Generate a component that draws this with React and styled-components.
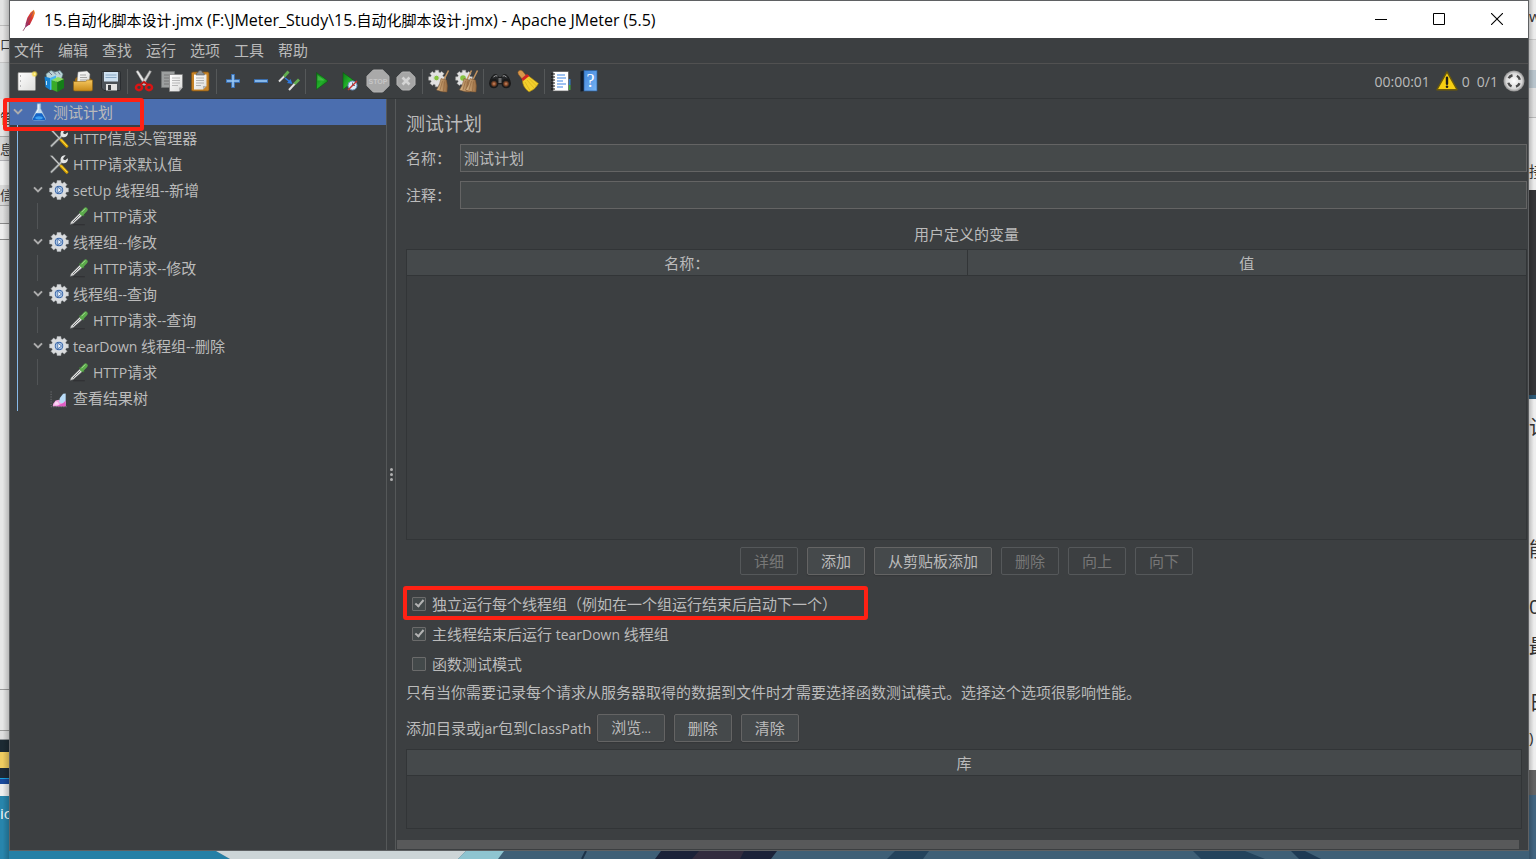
import React from "react";
import styled, { createGlobalStyle, css } from "styled-components";

const GlobalStyle = createGlobalStyle`
  *, *::before, *::after { box-sizing: border-box; }
  body {
    margin: 0;
    background: #3f5f76;
    color: #bbbbbb;
    font-family: "Open Sans", "Noto Sans CJK SC", sans-serif;
    font-size: 15px;
    line-height: 20px;
  }
  button, input { font: inherit; color: inherit; margin: 0; }
  svg { display: block; flex: none; }
`;

/* ---------- desktop behind the window ---------- */

const Desktop = styled.div`
  min-height: 100vh;
  display: grid;
  grid-template-columns: 9px minmax(0, 1fr) 7px;
  grid-template-rows: minmax(0, 1fr) 8px;
  overflow: hidden;
`;

const Strip = styled.div`
  grid-row: 1 / span 2;
  grid-column: ${(p) => (p.$side === "left" ? 1 : 3)};
  display: flex;
  flex-direction: column;
  overflow: hidden;
  color: #333333;
  position: relative;
  &::after {
    content: "";
    position: absolute;
    inset: 0;
    ${(p) =>
      p.$side === "left"
        ? css`background: linear-gradient(to right, transparent 30%, rgba(0, 0, 0, 0.2));`
        : css`background: linear-gradient(to left, transparent 30%, rgba(0, 0, 0, 0.2));`}
  }
`;

const Slice = styled.div`
  height: ${(p) => p.$h}px;
  flex: ${(p) => (p.$grow ? "1 0 auto" : "none")};
  background: ${(p) => p.$bg};
  color: ${(p) => p.$color || "inherit"};
  border-bottom: ${(p) => (p.$line ? `1px solid ${p.$line}` : "0")};
  display: flex;
  align-items: center;
  white-space: nowrap;
  overflow: hidden;
  font-size: ${(p) => p.$size || 15}px;
`;

const Wallpaper = styled.div`
  grid-column: 2;
  grid-row: 2;
  svg { width: 100%; height: 8px; }
`;

/* ---------- window frame ---------- */

const Window = styled.div`
  grid-column: 2;
  grid-row: 1;
  display: flex;
  flex-direction: column;
  background: #3c3f41;
  border: 1px solid #5f6163;
  position: relative;
`;

const TitleBar = styled.header`
  height: 37px;
  display: flex;
  align-items: center;
  background: #ffffff;
  color: #000000;
  padding: 0 2px 0 6px;
`;

const TitleText = styled.h1`
  margin: 0 0 0 2px;
  flex: 1;
  font-size: 15px;
  font-weight: 400;
  white-space: nowrap;
`;

const WindowButton = styled.button`
  width: 58px;
  height: 36px;
  border: 0;
  padding: 0 0 2px;
  background: transparent;
  display: flex;
  align-items: center;
  justify-content: center;
`;

const MenuBar = styled.nav`
  height: 26px;
  display: flex;
  align-items: center;
  gap: 14px;
  padding: 0 0 2px 4px;
  border-bottom: 1px solid #515151;
`;

const MenuButton = styled.button`
  border: 0;
  padding: 0;
  background: transparent;
`;

const ToolBar = styled.div`
  height: 35px;
  display: flex;
  align-items: center;
  padding: 0 3px 0 3px;
  border-bottom: 1px solid #323537;
`;

const ToolButton = styled.button`
  width: 28px;
  height: 28px;
  border: 0;
  padding: 0;
  background: transparent;
  display: flex;
  align-items: center;
  justify-content: center;
`;

const ToolSeparator = styled.span`
  width: 1px;
  height: 25px;
  margin: 0 2px;
  background: #555859;
`;

const Status = styled.div`
  margin-left: auto;
  display: flex;
  align-items: center;
  font-size: 14px;
  line-height: 22px;
`;

const StatusText = styled.span`
  padding-top: 2px;
  margin-left: ${(p) => p.$before || 0}px;
  margin-right: ${(p) => p.$after}px;
`;

/* ---------- body ---------- */

const Body = styled.main`
  flex: 1;
  display: grid;
  grid-template-columns: 376px 10px minmax(0, 1fr);
`;

const Splitter = styled.div`
  border-left: 1px solid #555859;
  border-right: 1px solid #555859;
  display: flex;
  flex-direction: column;
  align-items: center;
  justify-content: center;
  gap: 2px;
`;

const Dot = styled.i`
  width: 3px;
  height: 3px;
  border-radius: 50%;
  background: #b0b0b0;
`;

const Tree = styled.ul`
  list-style: none;
  margin: 0;
  padding: 0;
`;

const Branch = styled(Tree)`
  border-left: 1px solid ${(p) => (p.$active ? "#87b9e8" : "#515456")};
  margin-left: ${(p) => (p.$active ? 7 : 19)}px;
`;

const TreeRow = styled.div`
  position: relative;
  height: 26px;
  display: flex;
  align-items: center;
  padding-left: ${(p) => (p.$root ? 0 : 12)}px;
  background: ${(p) => (p.$selected ? "#4b6eaf" : "transparent")};
  white-space: nowrap;
`;

const Toggle = styled.button`
  width: 16px;
  height: 16px;
  border: 0;
  padding: 0;
  margin-right: 3px;
  background: transparent;
  display: flex;
  align-items: center;
  justify-content: center;
`;

const ToggleSpace = styled.span`
  width: 16px;
  margin-right: 3px;
`;

const NodeName = styled.span`
  margin-left: 4px;
`;

const Latin = styled.span`
  font-size: ${(p) => p.$size}px;
`;

const Marker = styled.span`
  position: absolute;
  border: 4px solid #ff2114;
  border-radius: 3px;
  pointer-events: none;
  z-index: 2;
`;

const TreeMarker = styled(Marker)`
  left: -7px;
  top: -1px;
  width: 141px;
  height: 33px;
`;

const OptionMarker = styled(Marker)`
  left: -3px;
  right: -31px;
  top: -3px;
  bottom: -1px;
`;

/* ---------- test plan form ---------- */

const Panel = styled.section`
  display: flex;
  flex-direction: column;
  padding: 13px 1px 1px 10px;
`;

const PanelTitle = styled.h2`
  margin: 0 0 8px;
  font-size: 19px;
  line-height: 24px;
  font-weight: 400;
`;

const Field = styled.div`
  display: flex;
  align-items: center;
  margin-bottom: 9px;
  label { width: 54px; }
`;

const TextInput = styled.input`
  flex: 1;
  min-width: 0;
  height: 28px;
  padding: 0 3px 2px;
  background: #45494a;
  border: 1px solid #646464;
  outline: 0;
`;

const Caption = styled.h3`
  margin: 0;
  padding-top: 1px;
  font-size: 15px;
  font-weight: 400;
  line-height: 30px;
  text-align: center;
`;

const TableBox = styled.div`
  border: 1px solid #323537;
  flex: ${(p) => (p.$fill ? "1 0 160px" : "0 0 80px")};
  margin-right: ${(p) => (p.$fill ? 0 : 5)}px;
`;

const Table = styled.table`
  width: 100%;
  table-layout: fixed;
  border-spacing: 0;
  th {
    height: 26px;
    padding: 0;
    font-weight: 400;
    background: #45494b;
    border-bottom: 1px solid #323537;
  }
  th + th { border-left: 1px solid #323537; }
`;

const Actions = styled.div`
  display: flex;
  align-items: center;
  gap: 9px;
  justify-content: ${(p) => (p.$center ? "center" : "flex-start")};
  margin: ${(p) => (p.$center ? "7px 0 14px" : "9px 0 7px")};
`;

const Button = styled.button`
  height: 28px;
  padding: 0 13px;
  border: 1px solid #646464;
  border-radius: 2px;
  background: #45494b;
  box-shadow: 0 1px 1px #35383a;
  white-space: nowrap;
  &:disabled {
    color: #777777;
    border-color: #55585a;
    background: transparent;
    box-shadow: none;
  }
`;

const ClassPathLabel = styled.span`
  margin-right: -3px;
`;

const Option = styled.label`
  position: relative;
  align-self: flex-start;
  height: 30px;
  display: flex;
  align-items: center;
  gap: 6px;
  padding-left: 6px;
`;

const CheckBox = styled.input`
  appearance: none;
  width: 14px;
  height: 14px;
  border: 1px solid #6b6b6b;
  border-radius: 1px;
  background: #43494a;
  display: flex;
  justify-content: center;
  &:checked::after {
    content: "";
    width: 5px;
    height: 9px;
    border: solid #b4b4b4;
    border-width: 0 2px 2px 0;
    transform: rotate(40deg);
  }
`;

const Note = styled.p`
  margin: 0;
  line-height: 26px;
`;

const ScrollTrack = styled.div`
  margin: 11px 8px 0 -9px;
  height: 9px;
  background: #58595a;
`;

/* Latin runs carry their own size beside the Chinese text around them. */
function Mixed({ text, size = 14 }) {
  return text.split(/([\x20-\x7e]+)/).map((part, i) =>
    i % 2 ? <Latin key={i} $size={size}>{part}</Latin> : part
  );
}

/* ---------- icons ---------- */

const Icon = ({ size = 24, children }) => (
  <svg width={size} height={size} viewBox="0 0 24 24" aria-hidden="true">{children}</svg>
);

const HiddenSvg = styled.svg`
  position: absolute;
`;

const Gradients = () => (
  <HiddenSvg width="0" height="0" aria-hidden="true">
    <defs>
      <linearGradient id="paper" x1="0" y1="0" x2="1" y2="1">
        <stop offset="0" stopColor="#ffffff" /><stop offset="1" stopColor="#dcdcda" />
      </linearGradient>
      <linearGradient id="folder" x1="0" y1="0" x2="0" y2="1">
        <stop offset="0" stopColor="#f6c860" /><stop offset="1" stopColor="#c88a18" />
      </linearGradient>
      <linearGradient id="play" x1="0" y1="0" x2="1" y2="1">
        <stop offset="0" stopColor="#0c7a14" /><stop offset=".5" stopColor="#22b02a" /><stop offset="1" stopColor="#0b6a10" />
      </linearGradient>
      <linearGradient id="straw" x1="0" y1="0" x2="1" y2="0">
        <stop offset="0" stopColor="#dcb98a" /><stop offset="1" stopColor="#9a6d42" />
      </linearGradient>
      <linearGradient id="quill" x1="1" y1="0" x2="0" y2="1">
        <stop offset="0" stopColor="#f8a020" /><stop offset=".4" stopColor="#e03a2a" /><stop offset="1" stopColor="#8a1a70" />
      </linearGradient>
      <linearGradient id="book" x1="0" y1="0" x2="1" y2="1">
        <stop offset="0" stopColor="#3f86dc" /><stop offset="1" stopColor="#79b4f4" />
      </linearGradient>
      <radialGradient id="silver"><stop offset="0" stopColor="#ffffff" /><stop offset=".75" stopColor="#d8d8d8" /><stop offset="1" stopColor="#8c8c8c" /></radialGradient>
      <radialGradient id="glow"><stop offset="0" stopColor="#fffbd0" /><stop offset=".4" stopColor="#f4dc50" /><stop offset="1" stopColor="#f4dc50" stopOpacity="0" /></radialGradient>
      <radialGradient id="lens"><stop offset="0" stopColor="#c89070" /><stop offset=".5" stopColor="#8a4a28" /><stop offset="1" stopColor="#1c1c1c" /></radialGradient>
    </defs>
  </HiddenSvg>
);

const FeatherIcon = () => (
  <Icon size={26}>
    <path d="M16.500 2.500l-3 2.500-3 5-1.500 5-.5 4 4.500-3 3-6 1.500-4.500z" fill="url(#quill)" />
    <path d="M16 4l-4 7-3 7-2.500 4" stroke="#8e4a68" strokeWidth=".8" fill="none" />
  </Icon>
);

const NewIcon = () => (
  <Icon>
    <rect x="3" y="3.500" width="17.500" height="18" rx="1" fill="url(#paper)" stroke="#8b8b88" strokeWidth=".7" />
    <path d="M5.500 6v2M5.500 11v2M5.500 16v2" stroke="#bbb" />
    <circle cx="19.500" cy="5" r="3.500" fill="url(#glow)" />
  </Icon>
);

const TemplatesIcon = () => (
  <Icon>
    <path d="M3 5l5-3.500 4 1.500 5-1.500 3 3.500-2 6H4z" fill="#b9d3d6" stroke="#587a80" strokeWidth=".6" />
    <path d="M6 3l3 3M10 2.500l3 3M15 2.500l2 3" stroke="#557" strokeWidth=".8" />
    <path d="M1.500 7.500L7 9v12L2.500 18z" fill="#1782d2" />
    <path d="M7 9l6-2.500v13L7 21z" fill="#47b4f2" />
    <path d="M3.500 12v4" stroke="#bfe4fa" />
    <path d="M8.500 11l6 2v10l-6-2.500z" fill="#39ac28" />
    <path d="M14.500 13l6.500-3v9l-6.500 4z" fill="#147d18" />
    <path d="M8.500 11L15 8l6 2-6.500 3z" fill="#8bdf60" />
  </Icon>
);

const OpenIcon = () => (
  <Icon>
    <path d="M4 10l2-2h12l3 3v9H4z" fill="#9a6812" />
    <path d="M7 3l9-1 3 3-1 9H6z" fill="url(#paper)" stroke="#888" strokeWidth=".5" />
    <path d="M9 6h6M9 8.500h7M9 11h7" stroke="#a5a5a5" />
    <path d="M2.500 12.500h12l2-1.500h5v9.500q0 1.500-1.500 1.500H4q-1.500 0-1.500-1.500z" fill="url(#folder)" stroke="#8f620f" strokeWidth=".6" />
  </Icon>
);

const SaveIcon = () => (
  <Icon>
    <path d="M2.500 3.500q0-1 1-1h17q1 0 1 1v17q0 1-1 1H5l-2.500-2.500z" fill="#4c5258" stroke="#25282b" strokeWidth=".8" />
    <rect x="5" y="3" width="14" height="9.500" fill="#cfe2f2" />
    <path d="M6.500 6h11M6.500 8.500h11" stroke="#88a8c4" />
    <rect x="7" y="15" width="11" height="6.500" fill="#e4e4e4" />
    <rect x="9" y="16" width="3" height="5" fill="#3b3f43" />
  </Icon>
);

const CutIcon = () => (
  <Icon>
    <path d="M4 2.500L6 1.500 15 15l-2.500 1.500z" fill="#e8e8e8" stroke="#8a8a8a" strokeWidth=".5" />
    <path d="M19.500 2.500L17.500 1.500 9 15l2.500 1.500z" fill="#d0d0d0" stroke="#777" strokeWidth=".5" />
    <ellipse cx="7" cy="18.500" rx="3" ry="2.700" fill="none" stroke="#d81414" strokeWidth="2.500" />
    <ellipse cx="17" cy="18.500" rx="3" ry="2.700" fill="none" stroke="#d81414" strokeWidth="2.500" />
    <path d="M8.500 15.500L12 13l3.500 2.500" stroke="#c01010" strokeWidth="2" fill="none" />
  </Icon>
);

const CopyIcon = () => (
  <Icon>
    <path d="M1.500 2.500h13v16h-13z" fill="#9c9f9f" stroke="#757878" strokeWidth=".7" />
    <path d="M4 6h8M4 9h5M4 12h5M4 15h5" stroke="#777" />
    <path d="M9.500 5.500h13v13l-3.500 4H9.500z" fill="url(#paper)" stroke="#7d7d7d" strokeWidth=".7" />
    <path d="M12 9h8M12 11.500h8M12 14h8M12 16.500h6" stroke="#aaa" strokeWidth=".8" />
    <path d="M22.500 18.500H19v4z" fill="#b5b5b5" />
  </Icon>
);

const PasteIcon = () => (
  <Icon>
    <rect x="3.500" y="3" width="17.500" height="19" rx="1.500" fill="#c78326" stroke="#805214" strokeWidth=".7" />
    <path d="M6 5.500h12.500V17L15 20.500H6z" fill="url(#paper)" />
    <path d="M8 9h8M8 11.500h8M8 14h8M8 16.500h5" stroke="#a0a0a0" strokeWidth=".8" />
    <path d="M8 6q0-2.500 2-2.500 0-2 2.200-2t2.200 2q2 0 2 2.500z" fill="#8d9296" stroke="#54585b" strokeWidth=".6" />
    <path d="M18.500 17H15v3.500z" fill="#b0b0b0" />
  </Icon>
);

const PlusIcon = () => (
  <Icon><path d="M12 5v14M5 12h14" stroke="#3b78c4" strokeWidth="3.600" /><path d="M12 6v12M6 12h12" stroke="#9ac8f4" strokeWidth="1.600" /></Icon>
);
const MinusIcon = () => (
  <Icon><path d="M5 12h14" stroke="#3b78c4" strokeWidth="3.600" /><path d="M6 12h12" stroke="#9ac8f4" strokeWidth="1.600" /></Icon>
);

const ToggleIcon = () => (
  <Icon>
    <path d="M2 12.500L7.500 7" stroke="#e2e2e2" strokeWidth="2" />
    <path d="M7 7.500l4.500-5" stroke="#62ae50" strokeWidth="2.800" />
    <path d="M12 21l6-6.500" stroke="#e2e2e2" strokeWidth="2" />
    <path d="M17.500 15l4.500-4.500" stroke="#62ae50" strokeWidth="2.800" />
    <path d="M8 9l4.500 3.500" stroke="#2f7ae0" strokeWidth="1.500" />
    <path d="M15.500 15l-5.500-1 3.500-4z" fill="#2f7ae0" />
  </Icon>
);

const PlayIcon = () => (
  <Icon><path d="M6.500 3.500L18 12 6.500 20.500z" fill="url(#play)" stroke="#0a5c10" strokeWidth=".6" /><path d="M7.500 6l7 5.500h-7z" fill="#72d86a" opacity=".45" /></Icon>
);

const PlayNoTimerIcon = () => (
  <Icon>
    <path d="M5 3.500L16.500 12 5 20.500z" fill="url(#play)" stroke="#0a5c10" strokeWidth=".6" />
    <circle cx="14.500" cy="16.500" r="4.500" fill="#dcebf8" stroke="#6a92c0" />
    <path d="M14.500 13.500v3h2.500" stroke="#456" fill="none" strokeWidth=".8" />
    <path d="M10 21l9-9" stroke="#c83030" strokeWidth="1.500" />
  </Icon>
);

const SmallCaps = styled.text`
  font: 700 7px "Liberation Sans", sans-serif;
`;

const StopIcon = () => (
  <Icon>
    <path d="M7.300 1h9.400L23 7.300v9.400L16.700 23H7.300L1 16.700V7.300z" fill="#a9a9a9" stroke="#b4b4b4" />
    <SmallCaps x="12" y="14.500" textAnchor="middle" fill="#c6c6c6">STOP</SmallCaps>
  </Icon>
);

const ShutdownIcon = () => (
  <Icon>
    <path d="M8.300 3h7.400L21 8.300v7.400L15.700 21H8.300L3 15.700V8.300z" fill="#a6a6a6" stroke="#b6b6b6" />
    <path d="M8.500 8.500l7 7M15.500 8.500l-7 7" stroke="#d4d4d4" strokeWidth="2.600" />
  </Icon>
);

const gearPath = (cx, cy, outer, inner) => {
  const pts = [];
  for (let i = 0; i < 8; i++) {
    const a = (i * Math.PI) / 4;
    [[-0.28, inner], [-0.2, outer], [0.2, outer], [0.28, inner]].forEach(([d, r]) =>
      pts.push(`${(cx + r * Math.sin(a + d)).toFixed(2)},${(cy - r * Math.cos(a + d)).toFixed(2)}`)
    );
  }
  return pts.join(" ");
};

const Broom = ({ x }) => (
  <g transform={`translate(${x} 0)`}>
    <path d="M20.500 1.500l-4.500 9" stroke="#c2935f" strokeWidth="1.600" />
    <path d="M13 9.500l5.500 1.500q1.500 5 .5 12-4 .5-10.500-2Q12 16 13 9.500z" fill="url(#straw)" stroke="#78502c" strokeWidth=".5" />
    <path d="M14.500 12L12 21M16.500 12.500L15.500 22" stroke="#8d6038" strokeWidth=".6" />
  </g>
);

const ClearIcon = () => (
  <Icon>
    <polygon points={gearPath(10, 9.500, 8.500, 6.500)} fill="#e2e2e2" stroke="#a0a0a0" strokeWidth=".5" />
    <circle cx="9.500" cy="9" r="2.800" fill="#86c440" stroke="#ddd" />
    <Broom x={1} />
  </Icon>
);

const ClearAllIcon = () => (
  <Icon>
    <polygon points={gearPath(9, 9.500, 8.500, 6.500)} fill="#e2e2e2" stroke="#a0a0a0" strokeWidth=".5" />
    <circle cx="8" cy="9" r="2.800" fill="#86c440" />
    <Broom x={-4} />
    <Broom x={2} />
  </Icon>
);

const SearchIcon = () => (
  <Icon>
    <path d="M2 12q2-6.500 5.500-6.500 2.500 0 3 3h3q.5-3 3-3 3.500 0 5.500 6.500l-10 3z" fill="#242628" stroke="#111" strokeWidth=".7" />
    <path d="M5.500 8q2-2 4-1M14.500 7q2-1 4 1" stroke="#a0a0a0" fill="none" />
    <circle cx="5.800" cy="14.500" r="4.800" fill="#1a1a1a" /><circle cx="18.200" cy="14.500" r="4.800" fill="#1a1a1a" />
    <circle cx="6" cy="14.800" r="3.400" fill="url(#lens)" /><circle cx="18" cy="14.800" r="3.400" fill="url(#lens)" />
    <rect x="10.500" y="9" width="3" height="5" fill="#6c6c6c" />
  </Icon>
);

const ResetSearchIcon = () => (
  <Icon>
    <path d="M2.500 2q2-1.500 4 0l4 5-4 3.500-4-5q-1.300-2 0-3.500z" fill="#d7964a" stroke="#8a5620" strokeWidth=".5" />
    <path d="M6.500 10.500L12 6.500l10.500 8q-3 6-9.500 8.500Q6 18 6.500 10.500z" fill="#f2cf2c" stroke="#9c7b0c" strokeWidth=".6" />
    <path d="M5.500 9.500l5.500-4.500 2.300 2L7 12z" fill="#cf2424" />
    <path d="M9 13l5 8.500M11 11l7 8M13 9.500l7.500 7.500" stroke="#d4ae1c" strokeWidth=".7" />
  </Icon>
);

const FunctionIcon = () => (
  <Icon>
    <rect x="16" y="10" width="5.500" height="6" fill="#2f80d0" /><rect x="16" y="16" width="5.500" height="5" fill="#3fa83c" />
    <rect x="4" y="2.500" width="15.500" height="19.500" fill="#fff" stroke="#555" strokeWidth=".7" />
    <path d="M8 6h8M8 9h9M8 12h6M8 15h9M8 18h6" stroke="#3f86e4" strokeWidth="1.200" />
    <path d="M2 5h4M2 8h4M2 11h4M2 14h4M2 17h4M2 20h4" stroke="#111" strokeWidth="1" />
  </Icon>
);

const HelpMark = styled.text`
  font: 18px "Liberation Serif", serif;
`;

const HelpIcon = () => (
  <Icon>
    <path d="M3.500 2.500L7 1.500v20.500l-3.500.5z" fill="#111a26" />
    <rect x="7" y="1.500" width="13" height="20.500" fill="url(#book)" stroke="#2c5e9c" strokeWidth=".7" />
    <HelpMark x="13.500" y="17.500" textAnchor="middle" fill="#ffffff">?</HelpMark>
  </Icon>
);

const WarningIcon = () => (
  <Icon size={22}>
    <path d="M12 2L23 21.500H1z" fill="#f7cf12" stroke="#6c5a08" strokeWidth="1.500" strokeLinejoin="round" />
    <path d="M12 8.500v6.500" stroke="#1c1c1c" strokeWidth="2.600" strokeLinecap="round" />
    <circle cx="12" cy="18.300" r="1.400" fill="#1c1c1c" />
  </Icon>
);

const ExpandIcon = () => (
  <Icon size={22}>
    <circle cx="12" cy="12" r="11.500" fill="url(#silver)" />
    <circle cx="12" cy="12" r="6.500" fill="none" stroke="#4a4a4a" strokeWidth="2.600" strokeDasharray="5.200 5.010" strokeDashoffset="-2.500" />
  </Icon>
);

const ChevronIcon = () => (
  <Icon size={16}><path d="M6 8l6 6 6-6" fill="none" stroke="#adadad" strokeWidth="3" /></Icon>
);

const FlaskIcon = () => (
  <Icon size={20}>
    <path d="M10 2h4v6l5.500 11q.8 3-2 3h-11q-2.800 0-2-3L10 8z" fill="#c4dcf0" stroke="#8fb0d0" strokeWidth=".6" />
    <path d="M8.500 13.500h7l4 6.500q.3 2-2 2h-11q-2.300 0-2-2z" fill="#1565c8" />
    <ellipse cx="12" cy="19" rx="4.500" ry="2" fill="#3fa0f0" />
    <path d="M11 3v6l-2 4" stroke="#fff" fill="none" />
  </Icon>
);

const ToolsIcon = () => (
  <Icon size={20}>
    <path d="M3 21.500L16 9" stroke="#55595b" strokeWidth="3.600" strokeLinecap="round" />
    <path d="M3 21.500L16 8.500" stroke="#b9bcbc" strokeWidth="2" strokeLinecap="round" />
    <path d="M14 9q-1-4 2-6.500 2-1.500 4-1l-3 3.500.5 2 2 .5L22.500 5q1 3-1 4.700-2.500 2-5 1.300z" fill="#e4e6e6" />
    <path d="M1.500 2L4 2l10 11-1 1z" fill="#d2d4d4" stroke="#838686" strokeWidth=".5" />
    <path d="M14.500 14.500l7 7.500" stroke="#d9a404" strokeWidth="3.400" strokeLinecap="round" />
    <path d="M14.500 14l7 7.500" stroke="#ffe04a" strokeWidth="1.200" />
  </Icon>
);

const GearIcon = () => (
  <Icon size={20}>
    <polygon points={gearPath(12, 12, 11.500, 9)} fill="#d9dbdd" stroke="#b4b8bc" strokeWidth=".6" />
    <circle cx="12" cy="12" r="5.800" fill="#3a66a6" stroke="#f2f2f2" strokeWidth="1" />
    <circle cx="12" cy="12" r="4" fill="#a8c4e6" />
    <path d="M10.500 8.500l4.500 3.500-4.500 3.500z" fill="#f4f8fc" stroke="#2c5696" strokeWidth=".8" />
  </Icon>
);

const PipetteIcon = () => (
  <Icon size={20}>
    <path d="M5 22.500h14" stroke="#2b2d2f" />
    <path d="M1.500 22l1-3L13 8.500l3 3L5 21z" fill="#e6e6e6" stroke="#77797a" strokeWidth=".7" />
    <path d="M4.500 19.500l8.500-8.500" stroke="#707374" strokeWidth="1.200" />
    <path d="M12.500 6.500l5.500 5.500" stroke="#3d7c35" strokeWidth="1.800" />
    <path d="M15.500 9l4.500-4.800" stroke="#5cab4c" strokeWidth="5" strokeLinecap="round" />
    <path d="M15 7.500l4.500-4.500" stroke="#a5dd92" strokeWidth="1.200" />
  </Icon>
);

const ChartIcon = () => (
  <Icon size={20}>
    <path d="M2.500 4v18.500H22" fill="none" stroke="#777a7c" strokeDasharray="1.500 1.500" />
    <path d="M4.500 22l.5-3 3-4 4-1 2 2 6 1v5z" fill="#f2a4e2" />
    <path d="M12 17l1-5 4-5 3-.5v12q-4 1-8-1.500z" fill="#b9dcf8" />
    <path d="M17 18l3-3v7H9z" fill="#e05cc4" />
    <path d="M6 20l2-4 3 1 1 3z" fill="#fbd6f4" />
  </Icon>
);

const MinimizeGlyph = () => <Icon size={12}><path d="M0 13h24" stroke="#000" strokeWidth="2" /></Icon>;
const MaximizeGlyph = () => <Icon size={12}><path d="M1 1h22v22H1z" fill="none" stroke="#000" strokeWidth="2" /></Icon>;
const CloseGlyph = () => <Icon size={12}><path d="M0 0l24 24M24 0L0 24" stroke="#000" strokeWidth="2.200" /></Icon>;

/* ---------- data ---------- */

const MENUS = ["文件", "编辑", "查找", "运行", "选项", "工具", "帮助"];

const TOOL_GROUPS = [
  [["新建", NewIcon], ["模板", TemplatesIcon], ["打开", OpenIcon], ["保存", SaveIcon]],
  [["剪切", CutIcon], ["复制", CopyIcon], ["粘贴", PasteIcon]],
  [["展开", PlusIcon], ["折叠", MinusIcon], ["切换", ToggleIcon]],
  [["启动", PlayIcon], ["不停顿启动", PlayNoTimerIcon], ["停止", StopIcon], ["关闭", ShutdownIcon]],
  [["清除", ClearIcon], ["清除全部", ClearAllIcon]],
  [["查找", SearchIcon], ["重置查找", ResetSearchIcon]],
  [["函数助手", FunctionIcon], ["帮助", HelpIcon]],
];

const NODES = [
  { name: "HTTP信息头管理器", icon: ToolsIcon },
  { name: "HTTP请求默认值", icon: ToolsIcon },
  { name: "setUp 线程组--新增", icon: GearIcon, children: [{ name: "HTTP请求", icon: PipetteIcon }] },
  { name: "线程组--修改", icon: GearIcon, children: [{ name: "HTTP请求--修改", icon: PipetteIcon }] },
  { name: "线程组--查询", icon: GearIcon, children: [{ name: "HTTP请求--查询", icon: PipetteIcon }] },
  { name: "tearDown 线程组--删除", icon: GearIcon, children: [{ name: "HTTP请求", icon: PipetteIcon }] },
  { name: "查看结果树", icon: ChartIcon },
];

function TreeNode({ node }) {
  const NodeIcon = node.icon;
  return (
    <li>
      <TreeRow>
        {node.children ? <Toggle aria-label="折叠"><ChevronIcon /></Toggle> : <ToggleSpace />}
        <NodeIcon />
        <NodeName><Mixed text={node.name} /></NodeName>
      </TreeRow>
      {node.children && (
        <Branch>
          {node.children.map((child, i) => <TreeNode key={i} node={child} />)}
        </Branch>
      )}
    </li>
  );
}

const LeftStrip = () => (
  <Strip $side="left" aria-hidden="true">
    <Slice $h={26} $bg="#e2e3e3" $line="#bcbcbc" />
    <Slice $h={37} $bg="#e4e4e4" $line="#c4c4c4" $size={13}>口</Slice>
    <Slice $h={36} $bg="#d8dbdc" />
    <Slice $h={38} $bg="#e4e4e4" $line="#a8a8a8" $size={13}>管</Slice>
    <Slice $h={24} $bg="#d6d6d6" $line="#b0b0b4" $size={13}>息</Slice>
    <Slice $h={24} $bg="#eeeeee" />
    <Slice $h={21} $bg="#d8d8d8" $line="#a8a8a8" $size={13}>信</Slice>
    <Slice $h={18} $bg="#dedede" $line="#8a8a8a" />
    <Slice $h={16} $bg="#eeeeee" $line="#8a8a8a" />
    <Slice $h={450} $bg="#e6e6e6" $line="#999999" />
    <Slice $h={41} $bg="#e6e6e6" $line="#999999" />
    <Slice $h={9} $bg="#dededf" $line="#8e9296" />
    <Slice $h={12} $bg="#1c2a33" />
    <Slice $h={16} $bg="#f0cc60" />
    <Slice $h={10} $bg="#1c2a38" />
    <Slice $h={1} $bg="#18a0e0" />
    <Slice $h={5} $bg="#1b4a9c" />
    <Slice $h={12} $bg="#eeeeee" />
    <Slice $h={34} $bg="#2885ac" $color="#ffffff">ic</Slice>
    <Slice $h={29} $bg="#2885ac" $grow />
  </Strip>
);

const RightStrip = () => (
  <Strip $side="right" aria-hidden="true">
    <Slice $h={31} $bg="#ececec">w</Slice>
    <Slice $h={9} $bg="#ececec" $line="#c8c8c8" />
    <Slice $h={30} $bg="#e0e0e0" />
    <Slice $h={18} $bg="#b8c4cc" />
    <Slice $h={30} $bg="#e0e0e0" $line="#b8b8b8" />
    <Slice $h={34} $bg="#ececec" />
    <Slice $h={38} $bg="#ececec">接</Slice>
    <Slice $h={205} $bg="#363638" />
    <Slice $h={4} $bg="#2e5a78" />
    <Slice $h={58} $bg="#eeeeee" $size={20}>计</Slice>
    <Slice $h={65} $bg="#eeeeee" />
    <Slice $h={56} $bg="#eeeeee" $size={20}>能</Slice>
    <Slice $h={58} $bg="#eeeeee" $size={20}>00</Slice>
    <Slice $h={22} $bg="#eeeeee" $size={20}>最</Slice>
    <Slice $h={28} $bg="#eeeeee" />
    <Slice $h={34} $bg="#eeeeee" $size={20}>日</Slice>
    <Slice $h={34} $bg="#eeeeee">)</Slice>
    <Slice $h={16} $bg="#eeeeee" />
    <Slice $h={25} $bg="#646464" />
    <Slice $h={64} $bg="#426580" $grow />
  </Strip>
);

export default function App() {
  return (
    <Desktop>
      <GlobalStyle />
      <Gradients />
      <LeftStrip />
      <Window>
        <TitleBar>
          <FeatherIcon />
          <TitleText>
            <Mixed size={16} text={"15.自动化脚本设计.jmx (F:\\JMeter_Study\\15.自动化脚本设计.jmx) - Apache JMeter (5.5)"} />
          </TitleText>
          <WindowButton aria-label="最小化"><MinimizeGlyph /></WindowButton>
          <WindowButton aria-label="最大化"><MaximizeGlyph /></WindowButton>
          <WindowButton aria-label="关闭窗口"><CloseGlyph /></WindowButton>
        </TitleBar>
        <MenuBar>
          {MENUS.map((m) => <MenuButton key={m}>{m}</MenuButton>)}
        </MenuBar>
        <ToolBar>
          {TOOL_GROUPS.map((group, g) => (
            <React.Fragment key={g}>
              {g > 0 && <ToolSeparator />}
              {group.map(([label, ToolIcon]) => (
                <ToolButton key={label} aria-label={label}><ToolIcon /></ToolButton>
              ))}
            </React.Fragment>
          ))}
          <Status>
            <StatusText $after={6}>00:00:01</StatusText>
            <WarningIcon />
            <StatusText $before={4} $after={7}>0</StatusText>
            <StatusText $after={5}>0/1</StatusText>
            <ExpandIcon />
          </Status>
        </ToolBar>
        <Body>
          <Tree>
            <li>
              <TreeRow $root $selected>
                <Toggle aria-label="折叠"><ChevronIcon /></Toggle>
                <FlaskIcon />
                <NodeName>测试计划</NodeName>
                <TreeMarker />
              </TreeRow>
              <Branch $active>
                {NODES.map((node, i) => <TreeNode key={i} node={node} />)}
              </Branch>
            </li>
          </Tree>
          <Splitter><Dot /><Dot /><Dot /></Splitter>
          <Panel>
            <PanelTitle>测试计划</PanelTitle>
            <Field>
              <label htmlFor="plan-name">名称：</label>
              <TextInput id="plan-name" defaultValue="测试计划" />
            </Field>
            <Field>
              <label htmlFor="plan-comment">注释：</label>
              <TextInput id="plan-comment" />
            </Field>
            <Caption>用户定义的变量</Caption>
            <TableBox $fill>
              <Table>
                <thead><tr><th scope="col">名称：</th><th scope="col">值</th></tr></thead>
              </Table>
            </TableBox>
            <Actions $center>
              <Button disabled>详细</Button>
              <Button>添加</Button>
              <Button>从剪贴板添加</Button>
              <Button disabled>删除</Button>
              <Button disabled>向上</Button>
              <Button disabled>向下</Button>
            </Actions>
            <Option>
              <CheckBox type="checkbox" defaultChecked />
              独立运行每个线程组（例如在一个组运行结束后启动下一个）
              <OptionMarker />
            </Option>
            <Option>
              <CheckBox type="checkbox" defaultChecked />
              <span><Mixed text="主线程结束后运行 tearDown 线程组" /></span>
            </Option>
            <Option>
              <CheckBox type="checkbox" />
              函数测试模式
            </Option>
            <Note>只有当你需要记录每个请求从服务器取得的数据到文件时才需要选择函数测试模式。选择这个选项很影响性能。</Note>
            <Actions>
              <ClassPathLabel><Mixed text="添加目录或jar包到ClassPath" /></ClassPathLabel>
              <Button><Mixed text="浏览..." size={12} /></Button>
              <Button>删除</Button>
              <Button>清除</Button>
            </Actions>
            <TableBox>
              <Table>
                <thead><tr><th scope="col">库</th></tr></thead>
              </Table>
            </TableBox>
            <ScrollTrack />
          </Panel>
        </Body>
      </Window>
      <RightStrip />
      <Wallpaper aria-hidden="true">
        <svg viewBox="0 0 1520 8" preserveAspectRatio="none">
          <rect width="1520" height="8" fill="#3f5f76" />
          <path d="M0 0h207l14 8H0z" fill="#2580a6" />
          <path d="M207 0h250l-8 8H221z" fill="#cdd5d7" />
          <path d="M457 0h38l-6 8h-40z" fill="#8ec4d0" />
          <path d="M577 0l-4 8" stroke="#1c3248" strokeWidth="2" />
          <path d="M652 0h116l-6 8H646z" fill="#1b2238" />
          <path d="M690 0h45l-4 8h-48z" fill="#332c3e" />
          <path d="M886 0h34l-6 8h-36z" fill="#24435c" />
          <path d="M1184 0h52l20 8h-64z" fill="#24435c" />
          <path d="M1282 0h14l16 8h-22z" fill="#1e3a54" />
        </svg>
      </Wallpaper>
    </Desktop>
  );
}
